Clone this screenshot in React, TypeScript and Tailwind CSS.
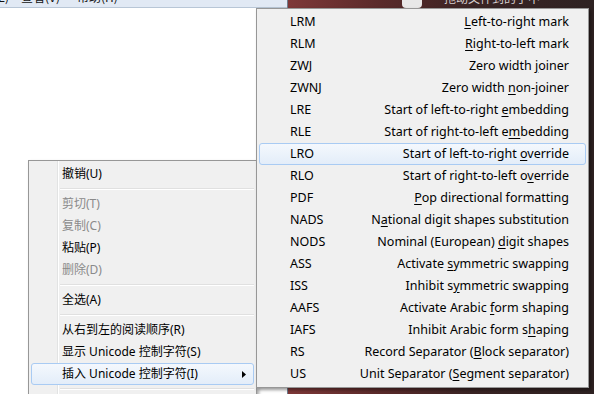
import React from "react";

type SubItem = [string, string, number];

const subItems: SubItem[] = [
  ["LRM", "Left-to-right mark", 0],
  ["RLM", "Right-to-left mark", 0],
  ["ZWJ", "Zero width joiner", 11],
  ["ZWNJ", "Zero width non-joiner", 11],
  ["LRE", "Start of left-to-right embedding", 23],
  ["RLE", "Start of right-to-left embedding", 24],
  ["LRO", "Start of left-to-right override", 23],
  ["RLO", "Start of right-to-left override", 24],
  ["PDF", "Pop directional formatting", 0],
  ["NADS", "National digit shapes substitution", 1],
  ["NODS", "Nominal (European) digit shapes", 19],
  ["ASS", "Activate symmetric swapping", 9],
  ["ISS", "Inhibit symmetric swapping", 9],
  ["AAFS", "Activate Arabic form shaping", 16],
  ["IAFS", "Inhibit Arabic form shaping", 21],
  ["RS", "Record Separator (Block separator)", 18],
  ["US", "Unit Separator (Segment separator)", 16],
];

type LeftItem = { t?: string; sep?: boolean; dis?: boolean; hl?: boolean; arrow?: boolean };

const leftItems: LeftItem[] = [
  { t: "撤销(U)" },
  { sep: true },
  { t: "剪切(T)", dis: true },
  { t: "复制(C)", dis: true },
  { t: "粘贴(P)" },
  { t: "删除(D)", dis: true },
  { sep: true },
  { t: "全选(A)" },
  { sep: true },
  { t: "从右到左的阅读顺序(R)" },
  { t: "显示 Unicode 控制字符(S)" },
  { t: "插入 Unicode 控制字符(I)", hl: true, arrow: true },
  { sep: true },
  { t: "打开输入法(O)" },
];

function Mnemonic({ text, idx }: { text: string; idx: number }) {
  return (
    <span>
      {text.slice(0, idx)}
      <span className="underline underline-offset-2 decoration-1">{text[idx]}</span>
      {text.slice(idx + 1)}
    </span>
  );
}

export default function App() {
  return (
    <div className="relative w-[594px] h-[394px] overflow-hidden font-['Noto_Sans','Noto_Sans_CJK_SC',sans-serif] text-[12px] text-black">
      <div className="flex h-full">
        {/* editor window */}
        <div className="w-[288px] h-full flex flex-col bg-white border-r border-[#6f7f90]">
          <div className="h-[8px] overflow-hidden bg-[#e1e9f4] border-b border-[#b8c6d6]">
            <div className="flex mt-[-11px] text-[12px] font-['Noto_Sans_CJK_SC',sans-serif] leading-[16px] text-[#111]">
              <span className="ml-[-30px] w-[52px]">编辑(E)</span>
              <span className="ml-[-1px] w-[56px]">查看(V)</span>
              <span className="">帮助(H)</span>
            </div>
          </div>
          <div className="flex-1 bg-white" />
        </div>
        {/* desktop */}
        <div className="flex-1 h-full bg-[linear-gradient(to_right,#7e3838,#5a2a2a_30%,#3a2424_60%,#2e2222)]">
          <div className="h-[8px] overflow-hidden flex items-start">
            <div className="ml-[114px] mt-[-6px] w-[20px] h-[14px] bg-[#e8e8e8] rounded-sm" />
            <div className="ml-[22px] mt-[-10px] text-[12px] leading-[15px] text-[#d8d0d0] font-['Noto_Sans_CJK_SC',sans-serif]">
              拖动文件到的了中
            </div>
          </div>
        </div>
      </div>

      {/* left context menu */}
      <div className="absolute left-[28px] top-[160px] w-[229px] border border-[#979797] p-[2px] shadow-[2px_2px_3px_rgba(0,0,0,0.35)] bg-[linear-gradient(to_right,#f0f0f0_28px,#e2e3e3_28px,#e2e3e3_29px,#ffffff_29px,#ffffff_30px,#f0f0f0_30px)]">
        {leftItems.map((it, i) =>
          it.sep ? (
            <div key={i} className="h-[8px] flex items-center pl-[29px]">
              <div className="w-full h-[2px] border-t border-[#e0e0e0] border-b border-b-white" />
            </div>
          ) : (
            <div
              key={i}
              className={
                "h-[22px] flex items-center pl-[30px] pr-[6px] rounded-[3px] border " +
                (it.hl
                  ? "border-[#a9cbf3] bg-[linear-gradient(to_bottom,#f4f8fd,#e3edf9)]"
                  : "border-transparent") +
                (it.dis ? " text-[#8a8a8a]" : " text-black")
              }
            >
              <span className="flex-1 whitespace-nowrap">{it.t}</span>
              {it.arrow && (
                <svg width="4" height="7" viewBox="0 0 4 7" className="mr-[1px]">
                  <path d="M0 0 L4 3.5 L0 7 Z" fill="#000" />
                </svg>
              )}
            </div>
          )
        )}
      </div>

      {/* submenu */}
      <div className="absolute left-[256px] top-[8px] w-[333px] border border-[#979797] p-[2px] bg-[#f0f0f0] shadow-[2px_2px_3px_rgba(0,0,0,0.4)] text-[12.5px]">
        {subItems.map(([a, d, u]) => (
          <div
            key={a}
            className={
              "h-[22px] flex items-center pl-[30px] pr-[16px] rounded-[3px] border " +
              (a === "LRO"
                ? "border-[#a9cbf3] bg-[linear-gradient(to_bottom,#f4f8fd,#e3edf9)]"
                : "border-transparent")
            }
          >
            <span className="w-[60px]">{a}</span>
            <span className="flex-1 text-right whitespace-nowrap">
              <Mnemonic text={d} idx={u} />
            </span>
          </div>
        ))}
      </div>
    </div>
  );
}
